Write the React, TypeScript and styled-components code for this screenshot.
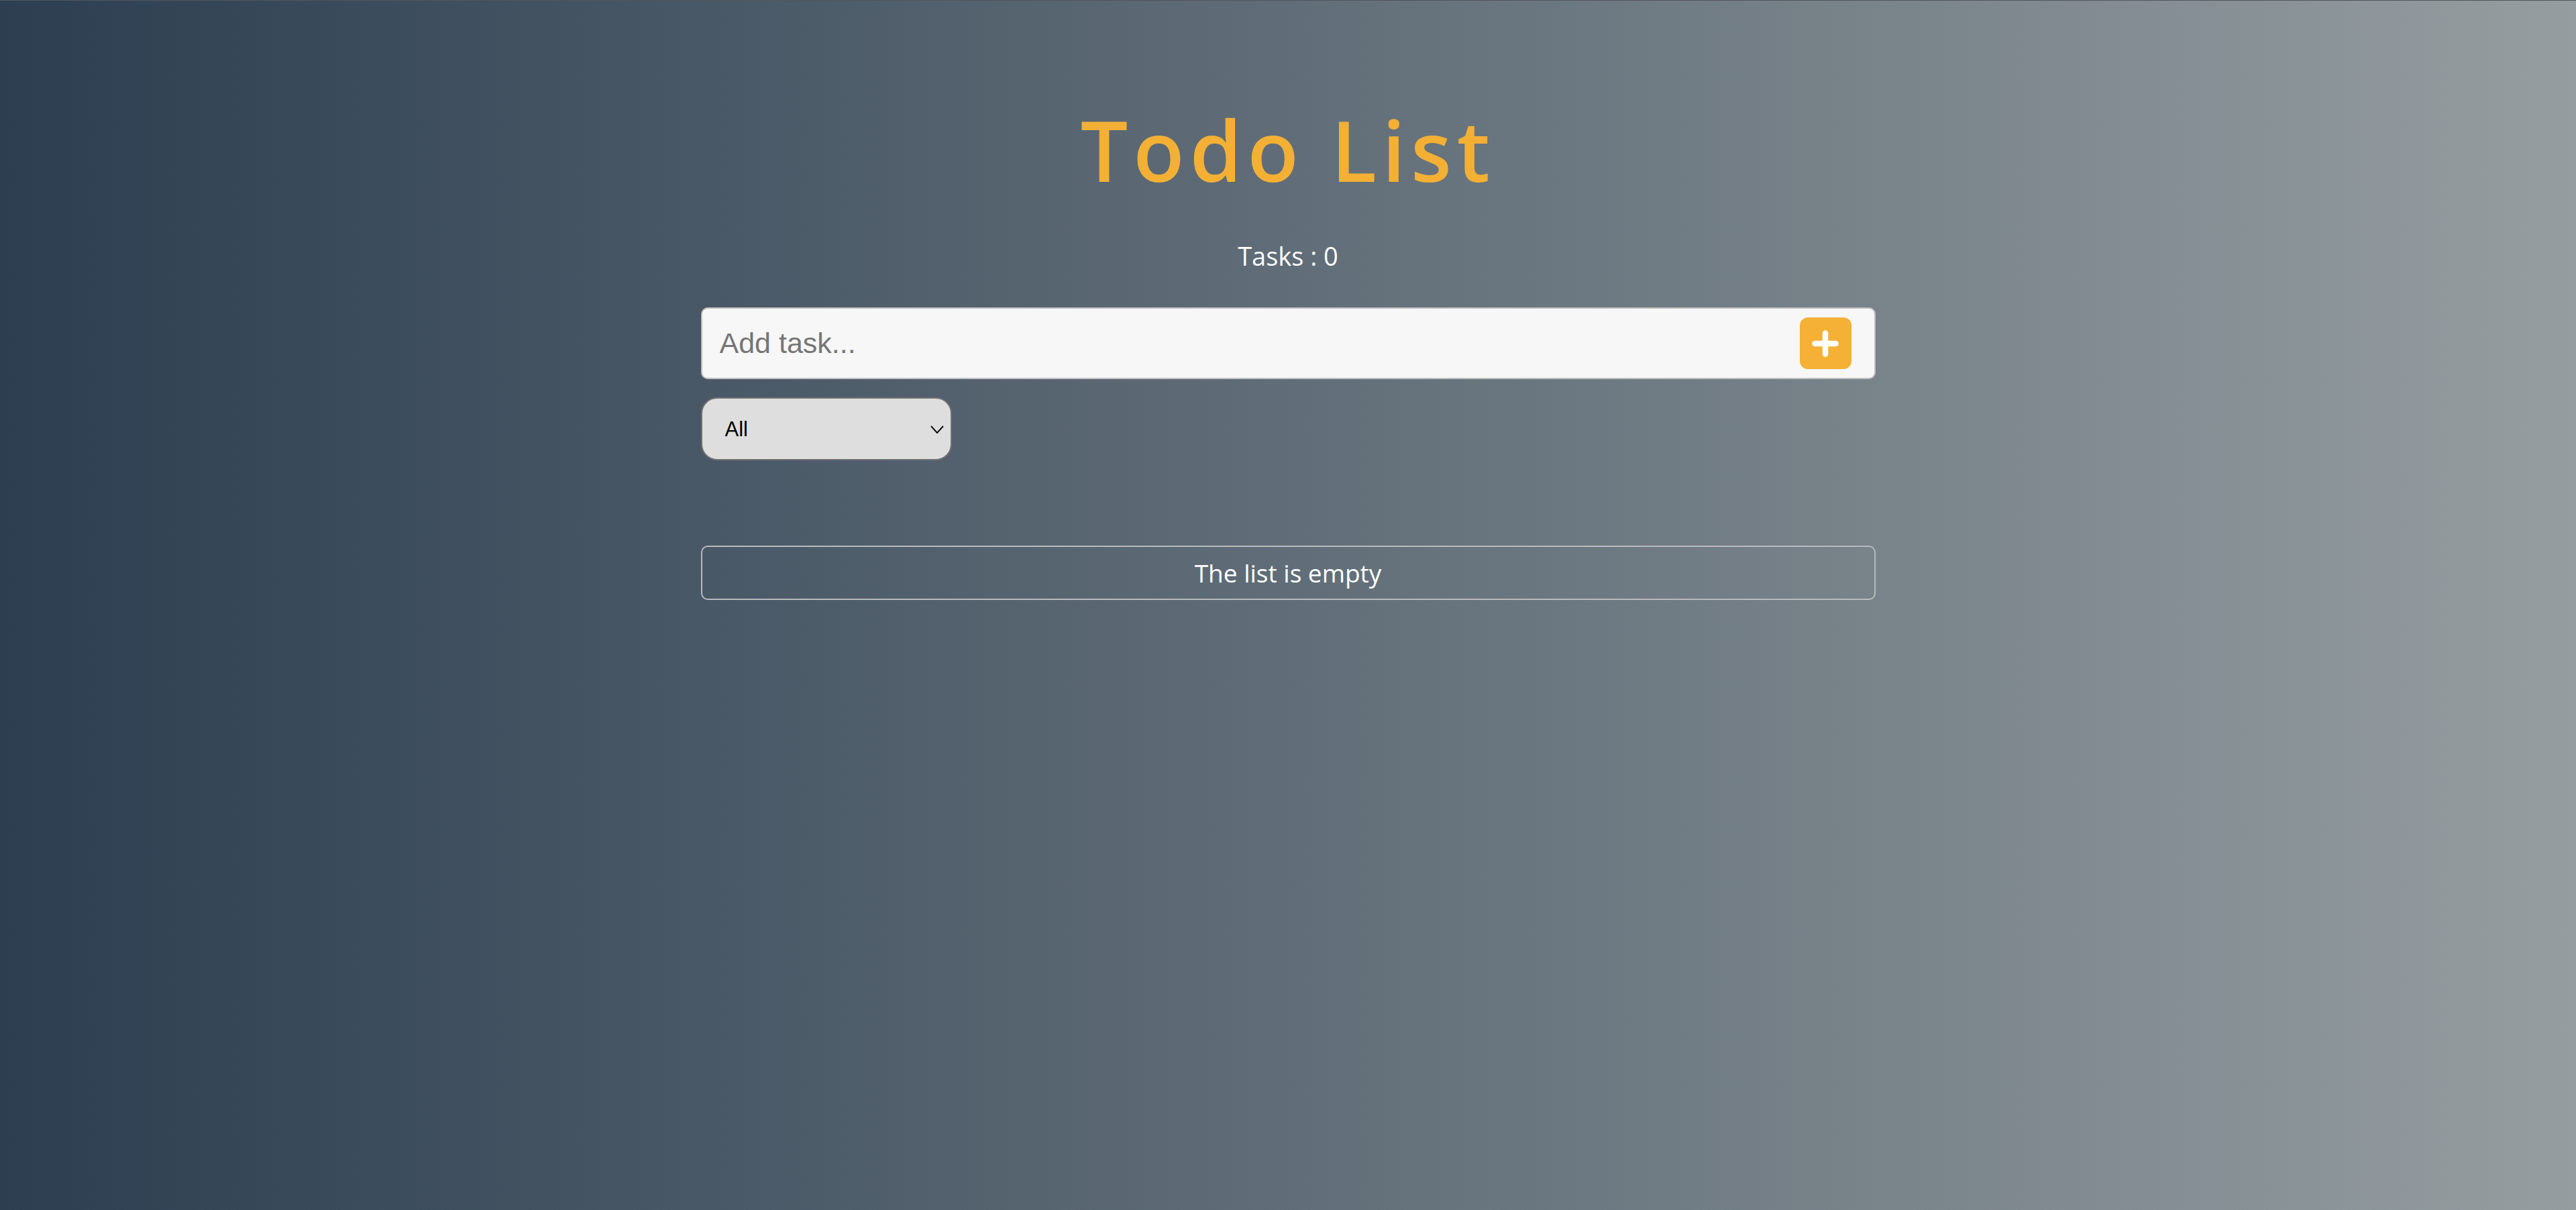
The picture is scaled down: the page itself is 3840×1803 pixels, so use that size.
import React, { useState } from "react"
import styled, { createGlobalStyle } from "styled-components"

const GlobalStyle = createGlobalStyle`
  * {
    box-sizing: border-box;
  }
  html, body {
    margin: 0;
    padding: 0;
  }
  body {
    min-height: 100vh;
    font-family: "Open Sans", "Noto Sans", sans-serif;
    background: linear-gradient(to right, #2c3e50, #959da0);
    border-top: 1px solid #52555a;
  }
`

const Page = styled.main`
  min-height: 100vh;
  display: flex;
  justify-content: center;
`

const Wrapper = styled.div`
  width: 1751px;
  padding-top: 159px;
  display: flex;
  flex-direction: column;
`

const Title = styled.h1`
  margin: 0;
  font-size: 125px;
  line-height: 1;
  font-weight: 600;
  letter-spacing: 8px;
  text-align: center;
  color: #f3b035;
`

const Counter = styled.p`
  margin: 77px 0 0;
  font-size: 38px;
  line-height: 1;
  text-align: center;
  color: #ffffff;
`

const AddForm = styled.form`
  margin-top: 58px;
  height: 107px;
  display: flex;
  align-items: center;
  padding: 0 34px 0 24px;
  background: #f7f7f7;
  border: 2px solid #bfbfbf;
  border-radius: 10px;
`

const TaskInput = styled.input`
  flex: 1;
  height: 100%;
  border: none;
  outline: none;
  background: transparent;
  font-family: "Liberation Sans", Arial, sans-serif;
  font-size: 43px;
  color: #333;

  &::placeholder {
    color: #767676;
  }
`

const AddButton = styled.button`
  width: 77px;
  height: 77px;
  flex-shrink: 0;
  display: flex;
  align-items: center;
  justify-content: center;
  padding: 0;
  border: none;
  border-radius: 12px;
  background: #f4b136;
  cursor: pointer;
`

const FilterWrap = styled.div`
  position: relative;
  margin-top: 27px;
  width: 374px;
`

const FilterSelect = styled.select`
  width: 100%;
  height: 94px;
  appearance: none;
  padding: 0 0 0 34px;
  font-family: "Liberation Sans", Arial, sans-serif;
  font-size: 31px;
  color: #000;
  background: #dedede;
  border: 2px solid #727272;
  border-radius: 24px;
  outline: none;
`

const Chevron = styled.svg`
  position: absolute;
  right: 12px;
  top: 42px;
  pointer-events: none;
`

const EmptyBox = styled.div`
  margin-top: 127px;
  height: 81px;
  display: flex;
  align-items: center;
  justify-content: center;
  border: 2px solid #b8babc;
  border-radius: 10px;
  font-size: 37px;
  color: #ffffff;
`

const App = () => {
  const [task, setTask] = useState("")
  const [filter, setFilter] = useState("all")
  const tasks: string[] = []

  return (
    <>
      <GlobalStyle />
      <Page>
        <Wrapper>
          <Title>Todo List</Title>
          <Counter>Tasks : {tasks.length}</Counter>
          <AddForm onSubmit={(e) => e.preventDefault()}>
            <TaskInput
              value={task}
              onChange={(e) => setTask(e.target.value)}
              placeholder="Add task..."
            />
            <AddButton type="submit">
              <svg width="40" height="40" viewBox="0 0 40 40">
                <path
                  d="M20 4.5v31M4.5 20h31"
                  stroke="#fff"
                  strokeWidth="8.5"
                  strokeLinecap="round"
                />
              </svg>
            </AddButton>
          </AddForm>
          <FilterWrap>
            <FilterSelect value={filter} onChange={(e) => setFilter(e.target.value)}>
              <option value="all">All</option>
              <option value="done">Done</option>
              <option value="todo">Todo</option>
            </FilterSelect>
            <Chevron width="20" height="12" viewBox="0 0 20 12">
              <path d="M1 1l9 10 9-10" fill="none" stroke="#111" strokeWidth="2" />
            </Chevron>
          </FilterWrap>
          <EmptyBox>The list is empty</EmptyBox>
        </Wrapper>
      </Page>
    </>
  )
}

export default App
